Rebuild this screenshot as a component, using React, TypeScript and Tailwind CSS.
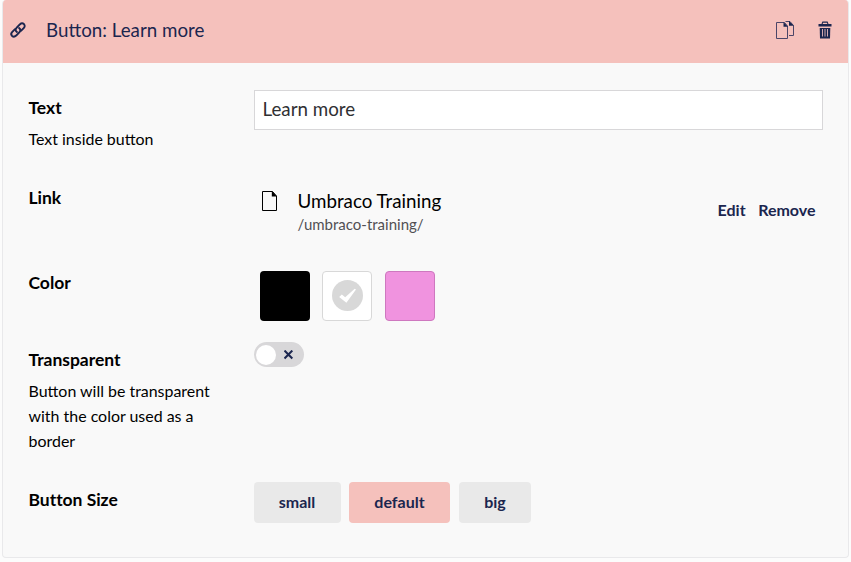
import type { ReactNode } from "react";

function LinkIcon() {
  return (
    <svg width="16" height="16" viewBox="0 0 16 16" fill="none" stroke="#1b264f" strokeWidth="2" strokeLinecap="round" strokeLinejoin="round">
      <path d="M6.9 10C5.3 8.8 5.3 7.1 6.5 5.9L9.8 2.4C11.1 1.2 12.8 1.1 13.9 2.1C15 3.2 14.9 4.9 13.7 6.1L11.2 8.6" />
      <path d="M9.1 6C10.7 7.2 10.7 8.9 9.5 10.1L6.2 13.6C4.9 14.8 3.2 14.9 2.1 13.9C1 12.8 1.1 11.1 2.3 9.9L4.8 7.4" />
    </svg>
  );
}

function CopyIcon() {
  return (
    <svg width="18" height="18" viewBox="0 0 18 18" fill="none" stroke="#4b4568" strokeWidth="1">
      <path d="M.5 1.5H8.5L11.5 5V17.5H.5Z" />
      <path d="M9.5 .5H14L17.5 4.5V14.5H13" />
      <path d="M7.5 1L12 5.7H7.5Z M13 0L18 4.8H13Z" fill="#1b264f" stroke="none" />
    </svg>
  );
}

function TrashIcon() {
  return (
    <svg width="14" height="18" viewBox="0 0 14 18" fill="none" stroke="#1b264f">
      <path d="M4 3L4.8 1.1H9.2L10 3" strokeWidth="1.1" />
      <path d="M.5 3H13.5V5.6H.5Z" fill="#1b264f" stroke="none" />
      <path d="M1.7 7H12.3L12 17.5H2Z" fill="#1b264f" stroke="none" />
      <path d="M4.5 8V15.5M7 8V15.5M9.5 8V15.5" stroke="#d3a9b0" strokeWidth="1" />
    </svg>
  );
}

function DocumentIcon() {
  return (
    <svg width="16" height="20" viewBox="0 0 16 20" fill="none" stroke="#000">
      <path d="M.5 .5H10.5L14.5 5V19.5H.5Z" />
      <path d="M9.8 0L15 5.4H9.8Z" fill="#000" stroke="none" />
    </svg>
  );
}

function Row({ label, description, height, children }: { label: string; description?: string; height: string; children: ReactNode }) {
  return (
    <div className={`flex ${height}`}>
      <div className="-ml-[0.5px] w-[225.5px] shrink-0 pt-[5px] text-black">
        <div className="text-[17.5px] font-bold leading-[25px] tracking-[-0.03px]">{label}</div>
        {description && <div className="mt-[6px] w-[198px] text-[15.95px] leading-[25px]">{description}</div>}
      </div>
      <div className="min-w-0 flex-1">{children}</div>
    </div>
  );
}

export default function App() {
  return (
    <div className="h-[562px] w-[851px] overflow-hidden bg-[#fcfcfc] pl-[2px] font-['Lato',sans-serif] text-[#1b264f]">
      <div className="h-[558px] w-[847px] overflow-hidden rounded-[4px] border border-t-0 border-[#e9e9eb] bg-[#f9f9f9]">
        <div className="-mx-px flex h-[63px] items-center bg-[#f5c1bc] pb-[3px] pl-[8px] pr-[17px]">
          <LinkIcon />
          <span className="ml-[20px] flex-1 text-[18.75px] leading-[24px]">Button: Learn more</span>
          <CopyIcon />
          <span className="ml-[24px]"><TrashIcon /></span>
        </div>

        <div className="pl-[26px] pr-[25px] pt-[27px]">
          <Row label="Text" description="Text inside button" height="h-[90px]">
            <input
              className="block h-[40px] w-[569px] border border-[#d8d7d9] bg-white pb-[3px] pl-[7.5px] text-[18.75px] text-[#303033] outline-none"
              defaultValue="Learn more"
            />
          </Row>

          <Row label="Link" height="h-[85px]">
            <div className="flex pl-[8px] pt-[11px]">
              <DocumentIcon />
              <div className="-mt-px ml-[19.5px] flex-1">
                <div className="text-[18.75px] leading-[22px] text-black">Umbraco Training</div>
                <div className="text-[15px] leading-[24px] text-[#515054]">/umbraco-training/</div>
              </div>
              <div className="mr-[7.5px] mt-[7px] flex h-[24px] gap-[12.5px] text-[16px] font-bold leading-[24px]">
                <button>Edit</button>
                <button>Remove</button>
              </div>
            </div>
          </Row>

          <Row label="Color" height="h-[77px]">
            <div className="flex pl-[6px] pt-[6px]">
              <div className="h-[50px] w-[50px] rounded-[4px] bg-black" />
              <div className="ml-[12px] flex h-[50px] w-[50px] items-center justify-center rounded-[4px] border border-[#d8d8d8] bg-white">
                <svg width="32" height="32" viewBox="0 0 32 32">
                  <circle cx="16.5" cy="15.5" r="15.5" fill="#d8d8d8" />
                  <path d="M8.2 17L10.8 14.4L14.2 17.2L23.7 8.8L25 9.6L15.4 22.8Z" fill="#fff" />
                </svg>
              </div>
              <div className="ml-[13px] h-[50px] w-[50px] rounded-[4px] border border-[#ce78bf] bg-[#f093df]" />
            </div>
          </Row>

          <Row label="Transparent" description="Button will be transparent with the color used as a border" height="h-[140px]">
            <div className="flex h-[25px] w-[50px] items-center rounded-full bg-[#d8d7d9] pl-[2px]">
              <div className="h-[20px] w-[20px] rounded-full bg-white" />
              <svg className="ml-[7.5px]" width="10" height="10" viewBox="0 0 10 10" stroke="#1b264f" strokeWidth="2.1">
                <path d="M.5 .6L8.3 8.4M8.3 .6L.5 8.4" />
              </svg>
            </div>
          </Row>

          <Row label="Button Size" height="h-[60px]">
            <div className="flex text-[16px] font-bold">
              <button className="h-[41px] w-[87px] rounded-[4px] bg-[#e9e9e9] pb-[2px] pr-px">small</button>
              <button className="ml-[8px] h-[41px] w-[101px] rounded-[4px] bg-[#f5c1bc] pb-[2px]">default</button>
              <button className="ml-[9px] h-[41px] w-[72px] rounded-[4px] bg-[#e9e9e9] pb-[2px]">big</button>
            </div>
          </Row>
        </div>
      </div>
    </div>
  );
}
